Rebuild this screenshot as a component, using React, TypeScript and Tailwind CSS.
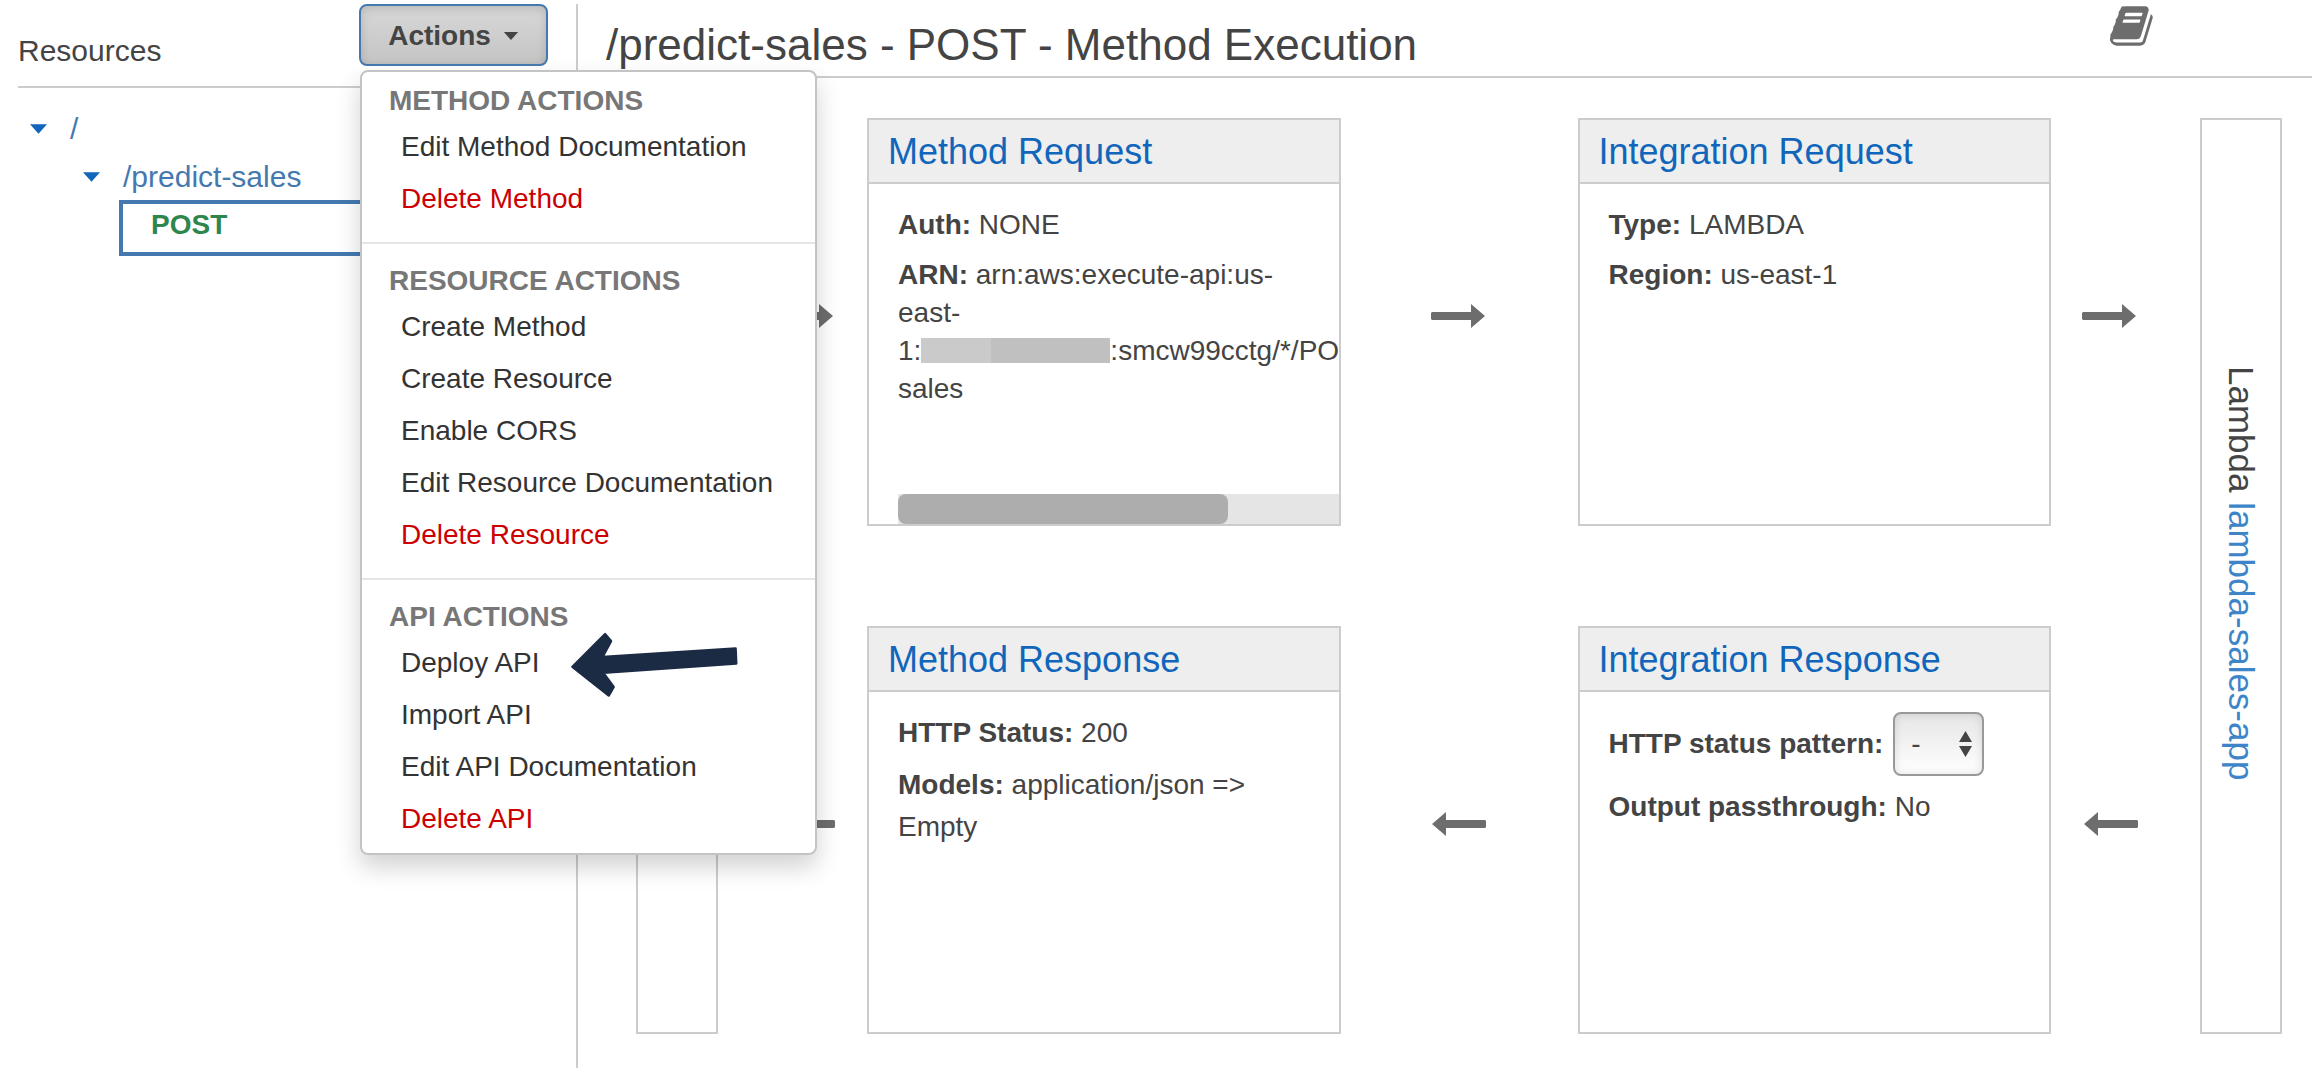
import React from 'react';

type MenuItem = { label: string; danger?: boolean; pointed?: boolean };
type MenuSection = { title: string; items: MenuItem[] };

const sections: MenuSection[] = [
  {
    title: 'METHOD ACTIONS',
    items: [{ label: 'Edit Method Documentation' }, { label: 'Delete Method', danger: true }],
  },
  {
    title: 'RESOURCE ACTIONS',
    items: [
      { label: 'Create Method' },
      { label: 'Create Resource' },
      { label: 'Enable CORS' },
      { label: 'Edit Resource Documentation' },
      { label: 'Delete Resource', danger: true },
    ],
  },
  {
    title: 'API ACTIONS',
    items: [
      { label: 'Deploy API', pointed: true },
      { label: 'Import API' },
      { label: 'Edit API Documentation' },
      { label: 'Delete API', danger: true },
    ],
  },
];

function Caret({ className }: { className: string }) {
  return (
    <svg viewBox="0 0 16 9" className={className} fill="currentColor" aria-hidden="true">
      <path d="M0 0h16L8 9z" />
    </svg>
  );
}

function FlowArrow({ back = false }: { back?: boolean }) {
  return (
    <svg viewBox="0 0 54 24" className="h-6 w-[54px] shrink-0" fill="#6d6d6d" aria-hidden="true">
      {back ? <path d="M14 0v8h39l1 1v6l-1 1H14v8L0 12z" /> : <path d="M40 0v8H1L0 9v6l1 1h39v8l14-12z" />}
    </svg>
  );
}

function PointerArrow() {
  return (
    <svg
      viewBox="30 30 506 200"
      className="pointer-events-none absolute -top-1.5 left-[208px] h-[67px] w-[169px]"
      fill="#1c2b44"
      stroke="#1c2b44"
      strokeWidth="7"
      strokeLinejoin="round"
      aria-hidden="true"
    >
      <path d="M37 137 135 39 153 60 128 107 526 82 528 127 130 155 161 197 146 223z" />
    </svg>
  );
}

function BookIcon() {
  return (
    <svg viewBox="0 0 1792 1792" className="size-[46px]" fill="#6d6d6d" aria-hidden="true">
      <path d="M1639 478q40 57 18 129l-275 906q-19 64-76.500 107.500t-122.500 43.500h-923q-77 0-148.500-53.500t-99.500-131.500q-24-67-2-127 0-4 3-27t4-37q1-8-3-21.500t-3-19.500q2-11 8-21t16.500-23.500 16.500-23.500q23-38 45-91.500t30-91.500q3-10 .5-30t-.5-28q3-11 17-28t17-23q21-36 42-92t25-90q1-9-2.500-32t.5-28q4-13 22-30.500t22-22.500q19-26 42.500-84.500t27.500-96.500q1-8-3-25.500t-2-26.500q2-8 9-18t18-23 17-21q8-12 16.500-30.500t15-35 16-36 19.500-32 26.500-23.500 36-11.500 47.500 5.500l-1 3q38-9 51-9h761q74 0 114 56t18 130l-274 906q-36 119-71.500 153.500t-128.500 34.500h-869q-27 0-38 15-11 16-1 43 24 70 144 70h923q29 0 56-15.500t35-41.500l300-987q7-22 5-57 38 15 59 43zm-1064 2q-4 13 2 22.500t20 9.500h608q13 0 25.500-9.500t16.500-22.500l21-64q4-13-2-22.500t-20-9.500h-608q-13 0-25.500 9.500t-16.500 22.500zm-83 256q-4 13 2 22.500t20 9.500h608q13 0 25.500-9.500t16.500-22.500l21-64q4-13-2-22.500t-20-9.500h-608q-13 0-25.500 9.500t-16.500 22.500z" />
    </svg>
  );
}

function ActionsMenu() {
  return (
    <div className="absolute top-[66px] left-px z-10 w-[457px] rounded-lg border-2 border-[#c4c4c4] bg-white pt-[9px] pb-2 shadow-[0_12px_24px_rgba(0,0,0,0.18)]">
      {sections.map((section, i) => (
        <section key={section.title} className={i > 0 ? 'mt-[17px] border-t-2 border-[#e5e5e5] pt-[17px]' : ''}>
          <h3 className="pl-[27px] leading-10 font-bold text-[#777]">{section.title}</h3>
          <ul>
            {section.items.map((item) => (
              <li key={item.label} className="relative">
                <button
                  type="button"
                  className={`block w-full pl-[39px] text-left leading-[52px] whitespace-nowrap ${item.danger ? 'text-[#cc0000]' : 'text-[#333]'}`}
                >
                  {item.label}
                </button>
                {item.pointed && <PointerArrow />}
              </li>
            ))}
          </ul>
        </section>
      ))}
    </div>
  );
}

function Card({ title, children }: { title: string; children: React.ReactNode }) {
  return (
    <article className="flex h-[408px] min-w-0 flex-col border-2 border-[#ccc]">
      <h2 className="border-b-2 border-[#ccc] bg-[#eee] pl-[19px] text-4xl leading-[62px] text-[#1166bb]">
        <a href="#" className="block pt-0.5 leading-[60px]">
          {title}
        </a>
      </h2>
      <div className="flex min-h-0 flex-1 flex-col gap-2.5 overflow-hidden pt-5 pl-[29px] leading-[42px]">{children}</div>
    </article>
  );
}

export default function App() {
  return (
    <div className="flex min-h-screen bg-white pt-1 font-['Liberation_Sans',Arial,sans-serif] text-[28px] text-[#444]">
      <aside className="w-[578px] shrink-0 border-r-2 border-[#ccc] pl-[18px]">
        <header className="flex h-[84px] items-start justify-between border-b-2 border-[#ccc] pr-7">
          <h2 className="mt-[26px] text-[30px] leading-[42px]">Resources</h2>
          <div className="relative">
            <button
              type="button"
              aria-expanded="true"
              className="flex h-[62px] w-[189px] items-center justify-center gap-3 rounded-lg border-2 border-[#4479b0] bg-linear-to-b from-[#d8d8d8] to-[#c4c4c4] pt-0.5 font-bold shadow-[inset_0_3px_10px_rgba(0,0,0,0.15)]"
            >
              Actions
              <Caret className="h-2 w-4" />
            </button>
            <ActionsMenu />
          </div>
        </header>
        <nav className="pt-5 text-[#4479b0]">
          <a href="#" className="ml-3 flex items-center gap-[23px] text-[30px] leading-[42px]">
            <Caret className="h-2.5 w-[17px] text-[#1166bb]" />/
          </a>
          <a href="#" className="mt-1.5 ml-[65px] flex items-center gap-[23px] text-[30px] leading-[42px]">
            <Caret className="h-2.5 w-[17px] text-[#1166bb]" />
            /predict-sales
          </a>
          <a
            href="#"
            className="mt-0.5 ml-[101px] block h-14 border-4 border-[#4479b0] pl-7 leading-[42px] font-bold text-[#2f864d]"
          >
            POST
          </a>
        </nav>
      </aside>

      <main className="min-w-0 flex-1">
        <header className="mr-2.5 flex h-[74px] items-start justify-between border-b-2 border-[#ccc] pl-7">
          <h1 className="text-[44px] leading-[82px] whitespace-nowrap">/predict-sales - POST - Method Execution</h1>
          <button type="button" aria-label="Documentation" className="-mt-px mr-[156px]">
            <BookIcon />
          </button>
        </header>

        <div className="mt-10 mr-10 ml-[58px] grid grid-cols-[82px_149px_1fr_237px_1fr_149px_82px] gap-y-[100px]">
          <section className="row-span-2 border-2 border-[#ccc]" />
          <div className="flex justify-end self-center pr-[34px] pb-3">
            <FlowArrow />
          </div>
          <Card title="Method Request">
            <p>
              <b>Auth:</b> NONE
            </p>
            <p className="leading-[38px] whitespace-nowrap">
              <b>ARN:</b> arn:aws:execute-api:us-
              <br />
              east-
              <br />
              1:
              <span className="inline-block h-[25px] w-[189px] bg-linear-to-r from-[#cacaca] from-37% to-[#c0c0c0] to-37% align-[-3px]" />
              :smcw99cctg/*/POST/predict-
              <br />
              sales
            </p>
            <div className="mt-auto h-[30px] shrink-0 bg-[#e5e5e5]">
              <div className="h-full w-3/4 rounded-lg bg-[#adadad]" />
            </div>
          </Card>
          <div className="flex justify-center self-center pr-0.5 pb-3">
            <FlowArrow />
          </div>
          <Card title="Integration Request">
            <p>
              <b>Type:</b> LAMBDA
            </p>
            <p className="leading-[38px]">
              <b>Region:</b> us-east-1
            </p>
          </Card>
          <div className="self-center pb-3 pl-[31px]">
            <FlowArrow />
          </div>
          <section className="row-span-2 flex items-center justify-center border-2 border-[#ccc] pb-1.5">
            <p className="text-[35px] leading-[42px] whitespace-nowrap [writing-mode:vertical-rl]">
              Lambda{' '}
              <a href="#" className="text-[#3d85c8]">
                lambda-sales-app
              </a>
            </p>
          </section>

          <div className="flex justify-end self-center pr-8 pb-3">
            <FlowArrow back />
          </div>
          <Card title="Method Response">
            <p>
              <b>HTTP Status:</b> 200
            </p>
            <p>
              <b>Models:</b> application/json =&gt;
              <br />
              Empty
            </p>
          </Card>
          <div className="flex justify-center self-center pb-3">
            <FlowArrow back />
          </div>
          <Card title="Integration Response">
            <div className="flex items-center gap-2.5">
              <label htmlFor="status-pattern" className="font-bold whitespace-nowrap">
                HTTP status pattern:
              </label>
              <div className="relative">
                <select
                  id="status-pattern"
                  className="block h-16 w-[91px] appearance-none rounded-lg border-2 border-[#999] bg-linear-to-b from-[#e6e6e6] to-white pl-4 shadow-[inset_0_0_8px_rgba(0,0,0,0.12)]"
                >
                  <option>-</option>
                </select>
                <svg
                  viewBox="0 0 13 26"
                  className="pointer-events-none absolute top-[19px] right-3 h-[26px] w-[13px]"
                  fill="#444"
                  aria-hidden="true"
                >
                  <path d="M6.500 0 13 11H0zM0 15h13L6.500 26z" />
                </svg>
              </div>
            </div>
            <p>
              <b>Output passthrough:</b> No
            </p>
          </Card>
          <div className="self-center pb-3 pl-[33px]">
            <FlowArrow back />
          </div>
        </div>
      </main>
    </div>
  );
}
